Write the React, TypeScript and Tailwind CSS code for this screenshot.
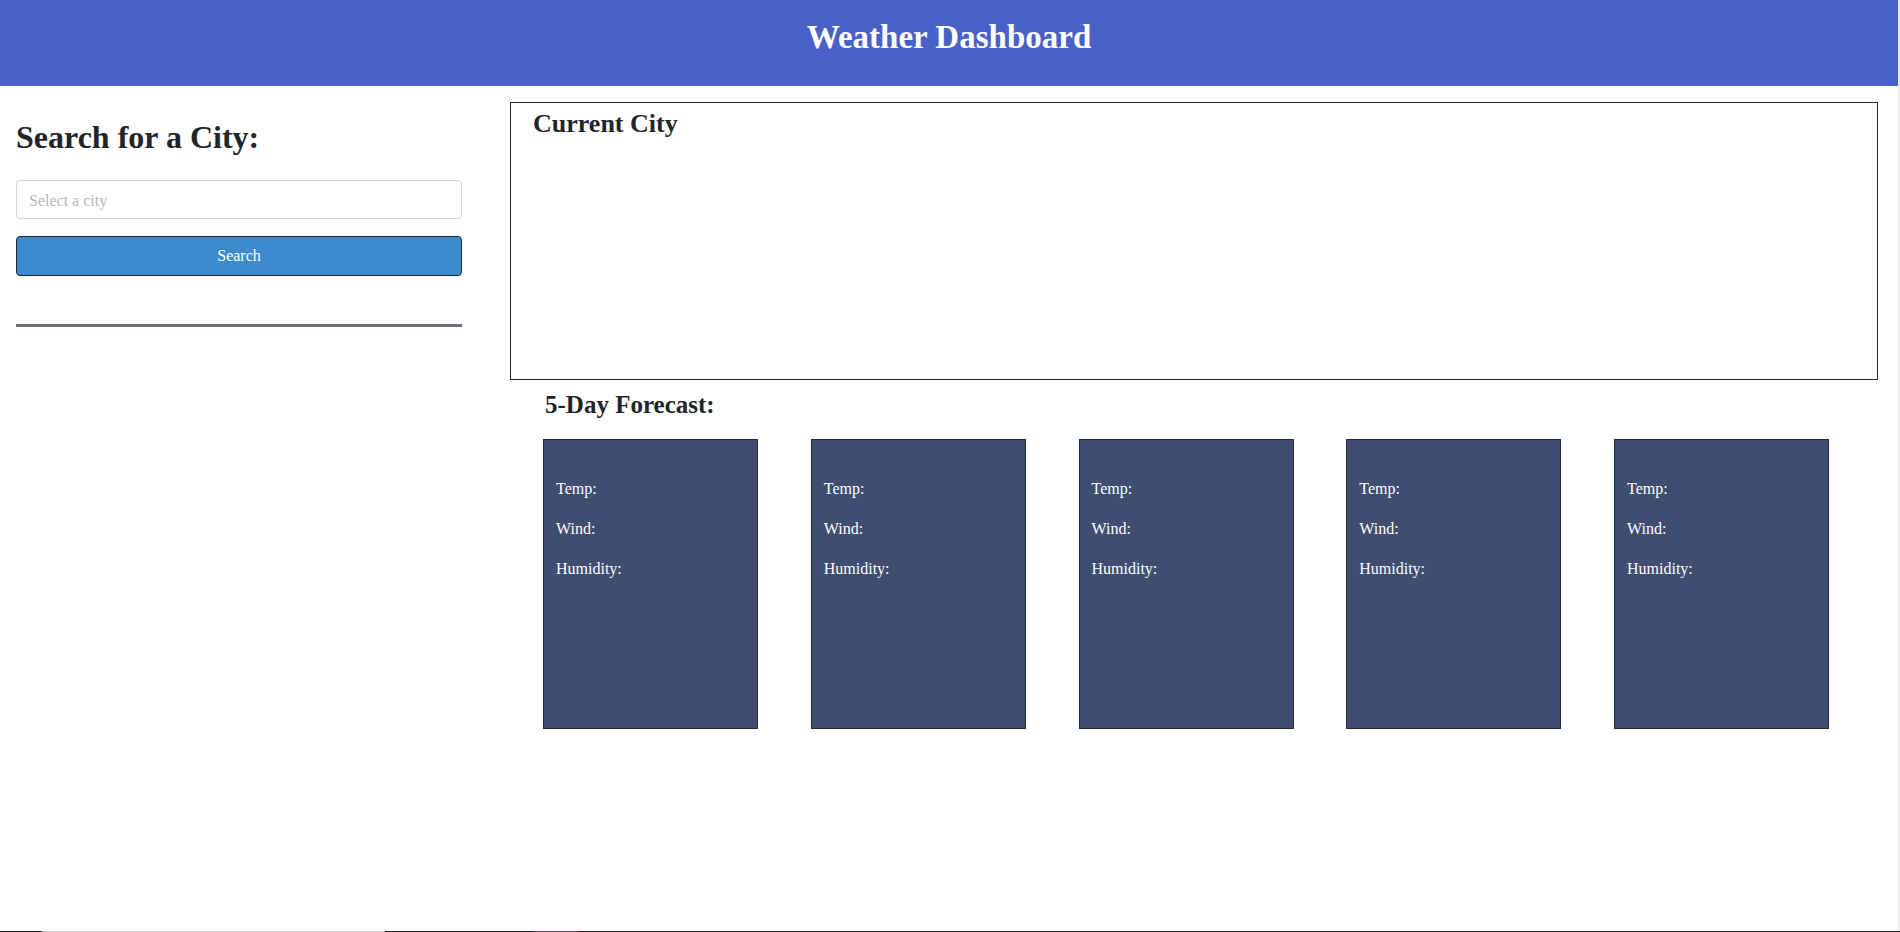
import React from "react";

const serif = { fontFamily: '"Liberation Serif", "Times New Roman", serif' };

function Card() {
  return (
    <div className="w-[215px] h-[290px] border border-[#23262d] bg-[#3e4d70] pl-[12px] pt-[37px] text-white text-[16px] leading-[24px]">
      <p className="mb-[16px]">Temp:</p>
      <p className="mb-[16px]">Wind:</p>
      <p>Humidity:</p>
    </div>
  );
}

export default function App() {
  return (
    <div className="min-h-[932px] flex flex-col bg-white text-[#212529]" style={serif}>
      <div className="flex flex-1">
        <div className="flex-1 flex flex-col">
          <header className="h-[86px] bg-[#4960c8] pt-[21px] flex justify-center">
            <h1 className="text-[33px] leading-none font-bold text-white">Weather Dashboard</h1>
          </header>
          <div className="flex">
            <aside className="w-[478px] px-[16px] pt-[35px]">
              <h2 className="text-[32px] leading-none font-bold">Search for a City:</h2>
              <input
                className="mt-[27px] w-full h-[39px] border border-[#d6d6d6] rounded-[4px] px-[12px] pt-[2px] text-[16px] placeholder:text-[#b8b8b8] outline-none"
                placeholder="Select a city"
                style={serif}
              />
              <button
                className="mt-[17px] w-full h-[40px] bg-[#3d8bcd] border border-[#23262d] rounded-[4px] text-white text-[16px]"
                style={serif}
              >
                Search
              </button>
              <div className="mt-[48px] h-[3px] bg-[#6c7079]" />
            </aside>
            <main className="flex-1 pl-[32px] pr-[20px] pt-[16px]">
              <section className="h-[278px] border border-[#23262d] pl-[22px] pt-[8px]">
                <h3 className="text-[26px] leading-none font-bold">Current City</h3>
              </section>
              <h3 className="mt-[12px] ml-[35px] text-[25px] leading-none font-bold">5-Day Forecast:</h3>
              <div className="mt-[22px] ml-[33px] w-[1286px] flex justify-between">
                <Card />
                <Card />
                <Card />
                <Card />
                <Card />
              </div>
            </main>
          </div>
        </div>
        <div className="w-[2px] bg-[#ececec]" />
      </div>
      <div className="h-px flex">
        <div className="w-[42px] bg-[#1e1e1e]" />
        <div className="w-[343px] bg-[#c8c8c8]" />
        <div className="w-[148px] bg-[#202030]" />
        <div className="w-[46px] bg-[#504858]" />
        <div className="flex-1 bg-[#2a2238]" />
      </div>
    </div>
  );
}
